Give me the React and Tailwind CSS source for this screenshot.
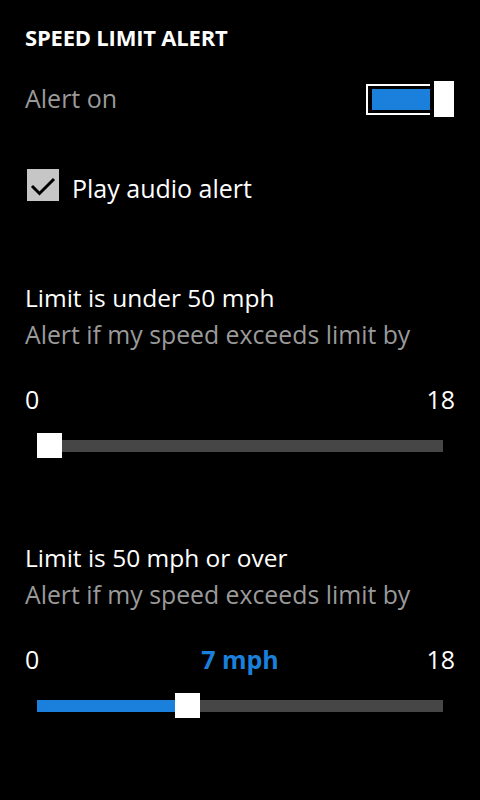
const font = { fontFamily: '"Open Sans", "Noto Sans", sans-serif' }

function Toggle() {
  return (
    <div className="mr-[1px] flex items-center">
      <div className="flex h-[31px] w-[64px] items-center border-2 border-r-0 border-white pl-[4px]">
        <div className="h-[21px] flex-1 bg-[#1a80dc]" />
      </div>
      <div className="ml-[4px] h-[36px] w-[20px] bg-white" />
    </div>
  )
}

function Checkbox() {
  return (
    <div className="flex h-[32px] w-[32px] items-center justify-center bg-[#c6c6c6]">
      <svg width="32" height="32" viewBox="0 0 32 32">
        <path d="M5 17 L12.5 24.5 L27 10" fill="none" stroke="#000" strokeWidth="3" />
      </svg>
    </div>
  )
}

function Slider({ value, max, thumbLeft, showValue }) {
  return (
    <div>
      <div className="flex h-[34px] items-end justify-between text-[25px] leading-[34px] text-white">
        <span className="w-[60px]">0</span>
        {showValue && (
          <span className="font-bold text-[#1a80dc]">{value} mph</span>
        )}
        <span className="w-[60px] text-right">{max}</span>
      </div>
      <div className="relative ml-[12px] mt-[17px] h-[25px] w-[406px]">
        <div className="absolute left-0 right-0 top-[7px] h-[12px] bg-[#464646]" />
        <div
          className="absolute left-0 top-[7px] h-[12px] bg-[#1a80dc]"
          style={{ width: thumbLeft }}
        />
        <div
          className="absolute top-0 h-[25px] w-[25px] bg-white"
          style={{ left: thumbLeft }}
        />
      </div>
    </div>
  )
}

function LimitSection({ title, value, max, thumbLeft, showValue }) {
  return (
    <div>
      <div className="text-[24.5px] leading-[36px] text-white">{title}</div>
      <div className="text-[24.8px] leading-[36px] text-[#9a9a9a]">
        Alert if my speed exceeds limit by
      </div>
      <div className="mt-[30px]">
        <Slider value={value} max={max} thumbLeft={thumbLeft} showValue={showValue} />
      </div>
    </div>
  )
}

export default function App() {
  return (
    <div className="min-h-[800px] w-[480px] bg-black text-white" style={font}>
      <div className="px-[25px] pt-[22px]">
        <div className="text-[22px] font-bold leading-[30px] tracking-[-0.2px]">
          SPEED LIMIT ALERT
        </div>

        <div className="mt-[27px] flex h-[40px] items-center justify-between">
          <span className="text-[25px] text-[#9a9a9a]">Alert on</span>
          <Toggle />
        </div>

        <div className="mt-[50px] flex items-start gap-[13px] pl-[2px]">
          <Checkbox />
          <span className="pt-[3px] text-[25px] leading-[32px]">Play audio alert</span>
        </div>

        <div className="mt-[76px]">
          <LimitSection title="Limit is under 50 mph" value={0} max={18} thumbLeft={0} />
        </div>

        <div className="mt-[82px]">
          <LimitSection
            title="Limit is 50 mph or over"
            value={7}
            max={18}
            thumbLeft={138}
            showValue
          />
        </div>
      </div>
    </div>
  )
}
